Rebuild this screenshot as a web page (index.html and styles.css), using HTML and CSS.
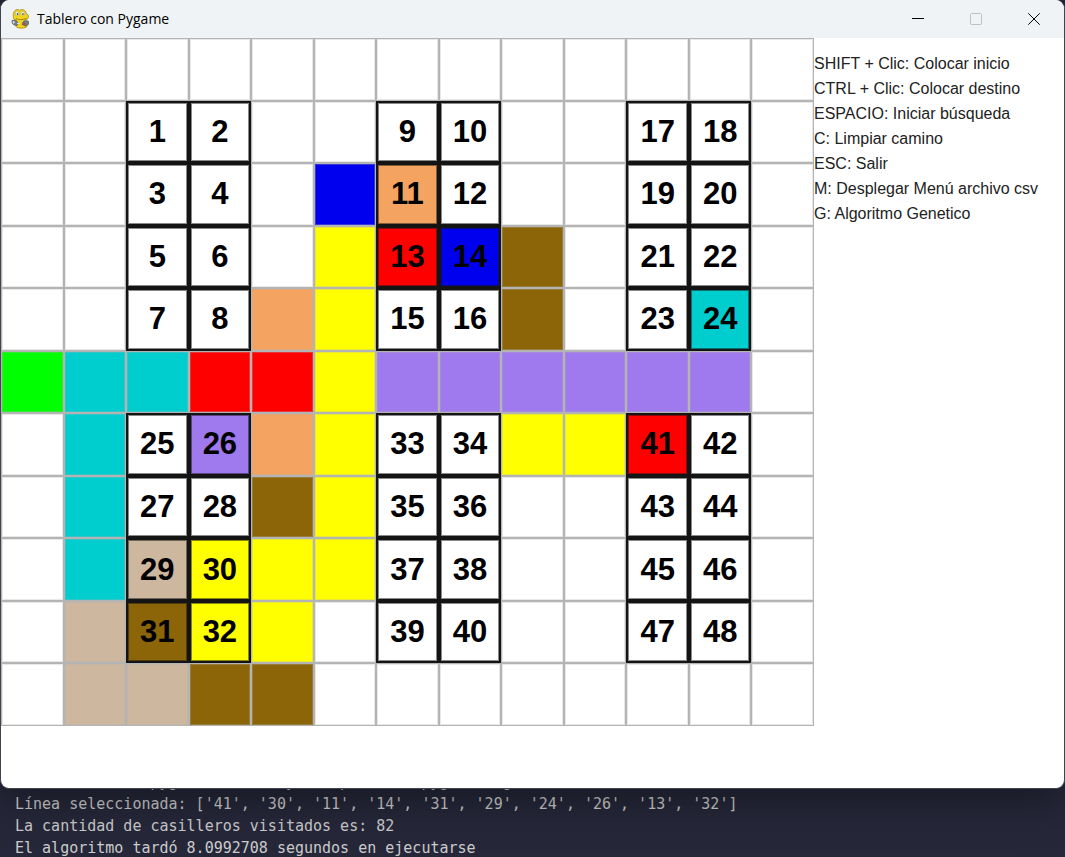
FILE: index.html
```html
<!DOCTYPE html>
<html lang="es">
<head>
<meta charset="utf-8">
<title>Tablero con Pygame</title>
<link rel="stylesheet" href="styles.css">
</head>
<body>
<main class="window">
  <header class="titlebar">
    <svg class="logo" viewBox="0 0 20 20" aria-hidden="true">
      <path d="M4 1.500C5 .2 7 .2 8.500 1.200 10 .4 12.500.3 13.500 1.500c1 .3 1.500 1.500 1.600 3 1.700.7 2.800 2.200 2.300 4-.4 1.600-2 2.500-4.400 2.700l.2 2.300 1.800 1.200c2 .5 1.500 2.800.2 3.500-2.500 1.300-7.700 1.300-9.500 0-1.200-.8-1-2.200.2-3l-.3-4C3 11 2 9 2.300 7.500 2 5.500 2.500 3 4 1.500Z" fill="#f0d51c" stroke="#927f16" stroke-width=".7"/>
      <ellipse cx="6.200" cy="4.600" rx="1.700" ry="2.300" fill="#f8f8ee" stroke="#8e8644" stroke-width=".4"/>
      <ellipse cx="11.800" cy="4.600" rx="1.700" ry="2.300" fill="#f8f8ee" stroke="#8e8644" stroke-width=".4"/>
      <path d="M6.500 4v2M12 4v2" stroke="#4a5360" stroke-width="1.200"/>
      <path d="M5 9.500c2.500 1.500 7 1.600 10.500-.2" fill="none" stroke="#9c7d0b" stroke-width=".9"/>
      <path d="m1 11.500 3-.5 2 1.500 1 2-1 2-3-.5L1 14ZM12 13l3-1.500 2.500.8v3L14.500 17 11 15.500Z" fill="#77808a" stroke="#414b50" stroke-width=".6"/>
      <path d="M2.500 12v2.500M1.500 13.200h2.500M6 14.500h3" stroke="#dce0df" stroke-width="1"/>
      <circle cx="13.500" cy="15" r="1.200" fill="#c9403d"/>
    </svg>
    <h1 class="title">Tablero con Pygame</h1>
    <button class="control" type="button" aria-label="Minimizar"><svg viewBox="0 0 12 12"><path d="M0 5.500h12"/></svg></button>
    <button class="control" type="button" aria-label="Maximizar" disabled><svg viewBox="0 0 12 12"><rect x=".5" y=".5" width="11" height="11" rx="1"/></svg></button>
    <button class="control" type="button" aria-label="Cerrar"><svg viewBox="0 0 12 12"><path d="m.3.3 11.400 11.400M11.700.3.3 11.700"/></svg></button>
  </header>
  <div class="content">
    <section class="board" aria-label="Tablero">
      <div></div><div></div><div></div><div></div><div></div><div></div><div></div><div></div><div></div><div></div><div></div><div></div><div></div>

      <div></div><div></div><div class="box">1</div><div class="box">2</div><div></div><div></div><div class="box">9</div><div class="box">10</div><div></div><div></div><div class="box">17</div><div class="box">18</div><div></div>

      <div></div><div></div><div class="box">3</div><div class="box">4</div><div></div><div class="blue"></div><div class="box orange">11</div><div class="box">12</div><div></div><div></div><div class="box">19</div><div class="box">20</div><div></div>

      <div></div><div></div><div class="box">5</div><div class="box">6</div><div></div><div class="yellow"></div><div class="box red">13</div><div class="box blue">14</div><div class="brown"></div><div></div><div class="box">21</div><div class="box">22</div><div></div>

      <div></div><div></div><div class="box">7</div><div class="box">8</div><div class="orange"></div><div class="yellow"></div><div class="box">15</div><div class="box">16</div><div class="brown"></div><div></div><div class="box">23</div><div class="box cyan">24</div><div></div>

      <div class="green"></div><div class="cyan"></div><div class="cyan"></div><div class="red"></div><div class="red"></div><div class="yellow"></div><div class="purple"></div><div class="purple"></div><div class="purple"></div><div class="purple"></div><div class="purple"></div><div class="purple"></div><div></div>

      <div></div><div class="cyan"></div><div class="box">25</div><div class="box purple">26</div><div class="orange"></div><div class="yellow"></div><div class="box">33</div><div class="box">34</div><div class="yellow"></div><div class="yellow"></div><div class="box red">41</div><div class="box">42</div><div></div>

      <div></div><div class="cyan"></div><div class="box">27</div><div class="box">28</div><div class="brown"></div><div class="yellow"></div><div class="box">35</div><div class="box">36</div><div></div><div></div><div class="box">43</div><div class="box">44</div><div></div>

      <div></div><div class="cyan"></div><div class="box tan">29</div><div class="box yellow">30</div><div class="yellow"></div><div class="yellow"></div><div class="box">37</div><div class="box">38</div><div></div><div></div><div class="box">45</div><div class="box">46</div><div></div>

      <div></div><div class="tan"></div><div class="box brown">31</div><div class="box yellow">32</div><div class="yellow"></div><div></div><div class="box">39</div><div class="box">40</div><div></div><div></div><div class="box">47</div><div class="box">48</div><div></div>

      <div></div><div class="tan"></div><div class="tan"></div><div class="brown"></div><div class="brown"></div><div></div><div></div><div></div><div></div><div></div><div></div><div></div><div></div>
    </section>
    <ul class="help">
      <li>SHIFT + Clic: Colocar inicio</li>
      <li>CTRL + Clic: Colocar destino</li>
      <li>ESPACIO: Iniciar búsqueda</li>
      <li>C: Limpiar camino</li>
      <li>ESC: Salir</li>
      <li>M: Desplegar Menú archivo csv</li>
      <li>G: Algoritmo Genetico</li>
    </ul>
  </div>
</main>
<pre class="terminal">Hello from the pygame community. https://www.pygame.org/contribute.html
Línea seleccionada: ['41', '30', '11', '14', '31', '29', '24', '26', '13', '32']
La cantidad de casilleros visitados es: 82
El algoritmo tardó 8.0992708 segundos en ejecutarse</pre>
</body>
</html>
```
FILE: styles.css
```css
* {
  box-sizing: border-box;
}

body {
  margin: 0;
  min-height: 100vh;
  overflow: hidden;
  background: #26283a;
  font-family: "Liberation Sans", Arial, sans-serif;
}

.window {
  position: relative;
  z-index: 1;
  border: solid #41434f;
  border-width: 0 1px 1px;
  border-radius: 9px;
  background: #fff;
  overflow: hidden;
  box-shadow: 0 8px 48px rgba(0, 0, 0, 0.45);
}

.titlebar {
  display: flex;
  align-items: center;
  height: 38px;
  padding: 0 1px 0 10px;
  background: #eff3f5;
}

.logo {
  width: 20px;
  height: 20px;
}

.title {
  flex: 1;
  margin: 0 0 0 6px;
  font: 400 14px/20px "Open Sans", "Noto Sans", sans-serif;
  color: #000;
}

.control {
  display: grid;
  place-items: center;
  width: 58px;
  height: 38px;
  padding: 0;
  border: 0;
  background: none;
}

.control svg {
  width: 12px;
  height: 12px;
  fill: none;
  stroke: #000;
}

.control:disabled svg {
  stroke: #bcc0c2;
}

.content {
  display: grid;
  grid-template-columns: minmax(0, 813fr) minmax(0, 250fr);
  align-items: start;
  padding-bottom: 62px;
}

.board {
  display: grid;
  grid-template-columns: repeat(13, 1fr);
  grid-template-rows: repeat(11, 1fr);
  aspect-ratio: 13 / 11;
}

.board > div {
  border: 1px solid #b4b4b4;
  box-shadow: inset 0 0 0 1px rgba(180, 180, 180, 0.3);
}

.board > .box {
  display: grid;
  place-items: center;
  border: 2px solid #141414;
  box-shadow: inset 0 0 0 1px rgba(20, 20, 20, 0.5);
  font-size: 31px;
  font-weight: 700;
  line-height: 32px;
  color: #000;
}

.blue { background: #0000ee; }
.orange { background: #f4a460; }
.red { background: #ff0000; }
.yellow { background: #ffff00; }
.brown { background: #8b6508; }
.cyan { background: #00cdcd; }
.purple { background: #9f79ee; }
.tan { background: #cdb79e; }
.green { background: #00ff00; }

.help {
  margin: 0;
  padding: 13px 0 0;
  list-style: none;
  font-size: 16px;
  line-height: 25px;
  white-space: nowrap;
  color: #222;
}

.terminal {
  margin: -18px 0 0;
  padding: 0 15px;
  font: 15px/22px "DejaVu Sans Mono", monospace;
  color: #ccc;
}
```
